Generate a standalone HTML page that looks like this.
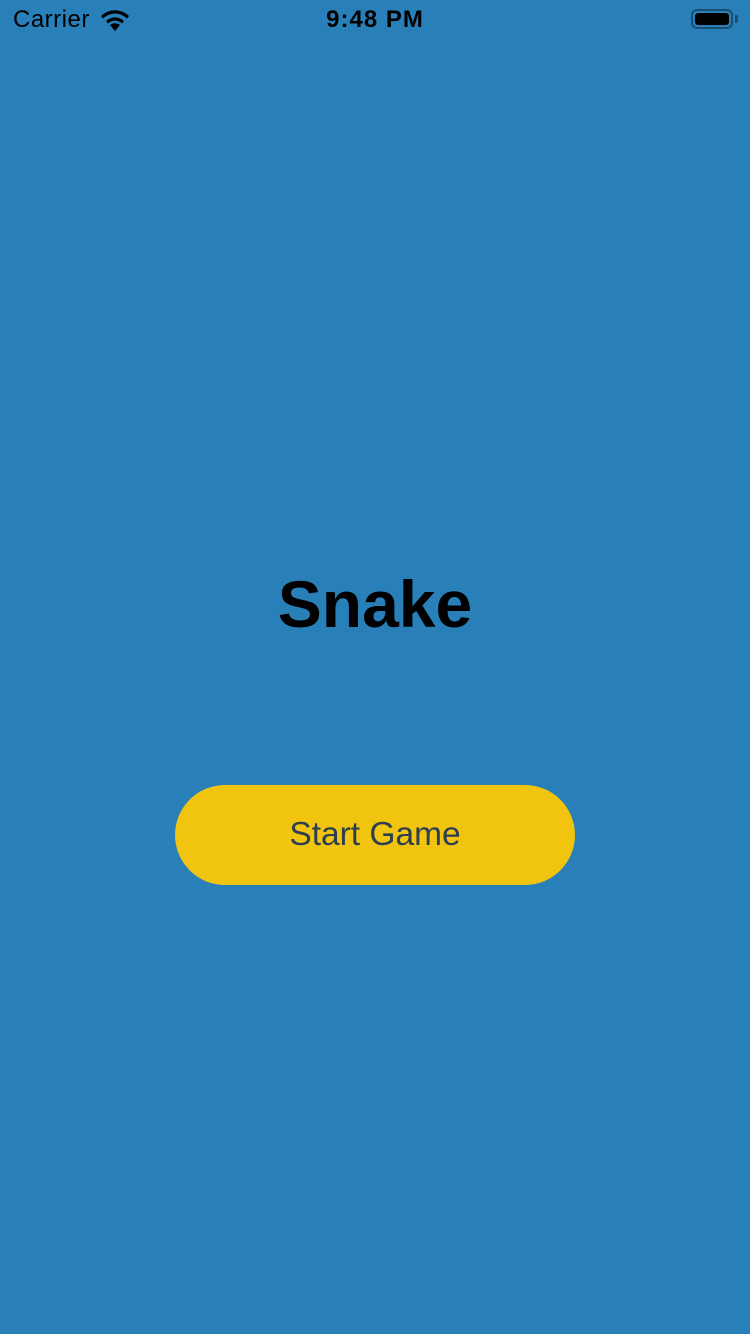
<!DOCTYPE html>
<html><head><meta charset="utf-8"><style>
html,body{margin:0;padding:0;width:750px;height:1334px;background:#2980b9;overflow:hidden;font-family:"Liberation Sans",sans-serif;position:relative}
.sb{position:absolute;top:0;left:0;width:750px;height:40px;font-size:24px;color:#000}
.carrier{position:absolute;left:13px;top:6px;letter-spacing:0.5px}
.time{position:absolute;left:0;width:750px;text-align:center;top:6px;font-weight:bold;letter-spacing:1px}
.title{position:absolute;top:566px;width:750px;text-align:center;font-size:66px;font-weight:bold;color:#000}
.btn{position:absolute;left:175px;top:785px;width:400px;height:100px;border-radius:50px;background:#f1c40f;color:#2c3e50;font-size:33.5px;text-align:center;line-height:100px}
</style></head><body>
<div class="sb">
<div class="carrier">Carrier</div>
<svg style="position:absolute;left:99px;top:9px" width="32" height="22" viewBox="0 0 32 22"><path d="M16 22 L11 16 A8 8 0 0 1 21 16 Z M7 12 A13 13 0 0 1 25 12 L23 14.5 A10 10 0 0 0 9 14.5 Z M2 7 A20 20 0 0 1 30 7 L28 9.5 A17 17 0 0 0 4 9.5 Z" fill="#000"/></svg>
<div class="time">9:48 PM</div>
<div style="position:absolute;left:691px;top:9px;width:42px;height:20px;border:2px solid #1a4f72;border-radius:6px;box-sizing:border-box"><div style="position:absolute;left:2px;top:2px;right:2px;bottom:2px;background:#000;border-radius:3px"></div></div>
<div style="position:absolute;left:735px;top:15px;width:3px;height:8px;background:#1a4f72;border-radius:0 2px 2px 0"></div>
</div>
<div class="title">Snake</div>
<div class="btn">Start Game</div>
</body></html>
